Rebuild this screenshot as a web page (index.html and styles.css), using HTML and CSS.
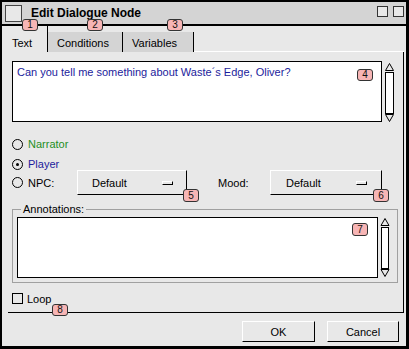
FILE: index.html
```html
<!DOCTYPE html>
<html lang="en">
<head>
  <meta charset="UTF-8" />
  <title>Edit Dialogue Node</title>
  <link rel="stylesheet" href="styles.css">
</head>
<body>
  <div class="window">
    <div class="titlebar">
      <span class="title-icon"></span>
      <span class="title">Edit Dialogue Node</span>
      <span class="title-btns">
        <span class="title-btn"></span>
        <span class="title-btn"></span>
      </span>
    </div>

    <div class="tabs">
      <div class="tab active">Text</div>
      <div class="tab conditions">Conditions</div>
      <div class="tab variables">Variables</div>
      <div class="tab-fill"></div>
    </div>

    <div class="panel">
      <div class="textrow main-text">
        <div class="textbox dialog-text">Can you tell me something about Waste´s Edge, Oliver?</div>
        <svg class="scrollbar" width="11" height="61" viewBox="0 0 11 61">
          <path d="M5.5 1.5 L1.5 8.5 L9.5 8.5 Z" fill="#e8e8e8" stroke="#000" />
          <rect x="1.5" y="10.5" width="8" height="41" fill="#fff" stroke="#000" />
          <path d="M1.5 52.5 L9.5 52.5 L5.5 59.5 Z" fill="#e8e8e8" stroke="#000" />
        </svg>
      </div>

      <div class="speakers">
        <label class="choice narrator"><span class="radio"></span>Narrator</label>
        <label class="choice player"><span class="radio checked"></span>Player</label>
        <div class="npc-row">
          <label class="choice npc"><span class="radio"></span>NPC:</label>
          <div class="dropdown"><span>Default</span><span class="dd-ind"></span></div>
          <span class="mood-label">Mood:</span>
          <div class="dropdown mood"><span>Default</span><span class="dd-ind"></span></div>
        </div>
      </div>

      <fieldset class="annotations">
        <legend>Annotations:</legend>
        <div class="textrow">
          <div class="textbox"></div>
          <svg class="scrollbar small" width="10" height="61" viewBox="0 0 10 61">
            <path d="M5 1.5 L1 8.5 L9 8.5 Z" fill="#e8e8e8" stroke="#000" />
            <rect x="1.5" y="10.5" width="7" height="41" fill="#fff" stroke="#000" />
            <path d="M1 52.5 L9 52.5 L5 59.5 Z" fill="#e8e8e8" stroke="#000" />
          </svg>
        </div>
      </fieldset>

      <label class="loop"><span class="check"></span>Loop</label>
    </div>

    <div class="buttons">
      <button class="btn ok">OK</button>
      <button class="btn cancel">Cancel</button>
    </div>

    <!-- callout markers -->
    <span class="badge b1">1</span>
    <span class="badge b2">2</span>
    <span class="badge b3">3</span>
    <span class="badge b4">4</span>
    <span class="badge b5">5</span>
    <span class="badge b6">6</span>
    <span class="badge b7">7</span>
    <span class="badge b8">8</span>
  </div>
</body>
</html>
```

FILE: styles.css
```css
body {
  margin: 0;
  font-family: "Liberation Sans", Arial, sans-serif;
  font-size: 11px;
  color: #000;
}
.window {
  position: relative;
  width: 409px;
  height: 349px;
  box-sizing: border-box;
  border: solid #000;
  border-width: 2px 3px 3px 2px;
  background: #e8e8e8;
}
.titlebar {
  display: flex;
  align-items: flex-start;
  height: 22px;
  padding: 3px 2px 0 3px;
  box-sizing: border-box;
  height: 24px;
  background: #d4d4d4;
  border-bottom: 2px solid #000;
}
.title-icon {
  width: 17px;
  height: 17px;
  box-sizing: border-box;
  border: 1px solid #444;
  background: #e8e8e8;
}
.title {
  margin: 1px 0 0 9px;
  font-size: 12px;
  font-weight: bold;
  line-height: 14px;
}
.title-btns {
  margin: 1px 0 0 auto;
  display: flex;
  gap: 5px;
}
.title-btn {
  width: 11px;
  height: 11px;
  box-sizing: border-box;
  border: 1px solid #333;
  background: #e8e8e8;
}
.tabs {
  display: flex;
  height: 26px;
}
.tab {
  box-sizing: border-box;
  border-right: 1px solid #000;
  line-height: 13px;
}
.tab.active {
  width: 46px;
  padding: 11px 0 0 10px;
}
.tab.conditions,
.tab.variables {
  margin-top: 6px;
  height: 20px;
  padding: 5px 0 0 9px;
  background: #d4d4d4;
}
.tab.conditions {
  width: 75px;
}
.tab.variables {
  width: 71px;
}
.tab-fill {
  flex: 1;
  margin-right: 2px;
  border-bottom: 1px solid #fff;
}
.panel {
  margin: 0 2px 0 6px;
  padding: 9px 0 8px 4px;
  border-right: 1px solid #000;
  border-bottom: 1px solid #000;
}
.textrow {
  display: flex;
  align-items: flex-start;
}
.main-text {
  margin-right: 8px;
}
.textbox {
  flex: 1;
  height: 61px;
  box-sizing: border-box;
  border: 1px solid #000;
  background: #fff;
  padding: 4px;
  line-height: 13px;
}
.dialog-text {
  color: #1c1c9c;
}
.scrollbar {
  display: block;
  margin: 1px 0 0 2px;
}
.scrollbar.small {
  margin: 0 0 0 2px;
}
.speakers {
  margin-top: 11px;
}
.choice {
  display: flex;
  align-items: center;
  height: 20px;
}
.radio {
  position: relative;
  width: 11px;
  height: 11px;
  box-sizing: border-box;
  border: 1px solid #000;
  border-radius: 50%;
  margin-right: 5px;
}
.radio.checked::after {
  content: "";
  position: absolute;
  left: 3px;
  top: 3px;
  width: 3px;
  height: 3px;
  border-radius: 50%;
  background: #000;
}
.narrator {
  color: #1f8f1f;
}
.player {
  color: #1c1c9c;
}
.npc-row {
  display: flex;
  align-items: center;
  height: 25px;
  margin-top: -4px;
}
.choice.npc {
  width: 65px;
}
.dropdown {
  display: flex;
  align-items: center;
  justify-content: space-between;
  width: 110px;
  height: 25px;
  box-sizing: border-box;
  padding: 0 13px 0 14px;
  border: 1px solid;
  border-color: #fff #000 #000 #fff;
}
.dropdown.mood {
  width: 112px;
  padding: 0 14px 0 15px;
}
.dd-ind {
  width: 11px;
  height: 4px;
  box-sizing: border-box;
  border: 1px solid;
  border-color: #fff #000 #000 #fff;
  margin-top: 1px;
}
.mood-label {
  width: 52px;
  margin-left: 31px;
}
.annotations {
  margin: 8px 5px 0 0;
  padding: 1px 7px 4px 4px;
  min-width: 0;
  border: 1px solid #a0a0a0;
}
.annotations legend {
  margin-left: 4px;
  padding: 0 2px;
  line-height: 13px;
}
.loop {
  display: flex;
  align-items: center;
  height: 11px;
  margin-top: 10px;
}
.check {
  width: 11px;
  height: 11px;
  box-sizing: border-box;
  border: 1px solid #000;
  margin-right: 4px;
}
.buttons {
  display: flex;
  justify-content: flex-end;
  gap: 12px;
  padding: 8px 7px 0 0;
}
.btn {
  height: 21px;
  box-sizing: border-box;
  padding: 0;
  background: #e8e8e8;
  border: 1px solid;
  border-color: #fff #000 #000 #fff;
  font: inherit;
  color: #000;
}
.btn.ok {
  width: 73px;
}
.btn.cancel {
  width: 72px;
}
.badge {
  position: absolute;
  width: 16px;
  height: 12px;
  box-sizing: border-box;
  border: 1px solid #333;
  border-radius: 3px;
  background: #f7b5b5;
  font-size: 10px;
  line-height: 10px;
  text-align: center;
  color: #111;
}
.b1 { left: 20px; top: 17px; }
.b2 { left: 85px; top: 17px; }
.b3 { left: 165px; top: 17px; }
.b4 { left: 355px; top: 67px; }
.b5 { left: 181px; top: 187px; height: 13px; line-height: 11px; }
.b6 { left: 371px; top: 187px; height: 13px; line-height: 11px; }
.b7 { left: 350px; top: 221px; height: 13px; line-height: 11px; }
.b8 { left: 50px; top: 302px; }
```
